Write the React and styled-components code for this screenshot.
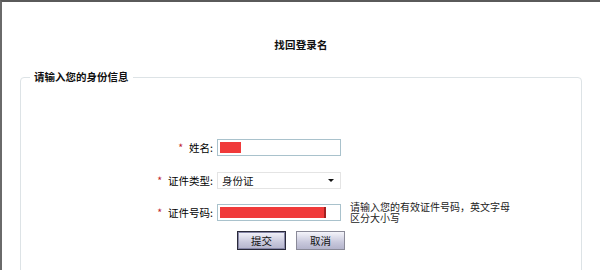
import styled, { createGlobalStyle } from "styled-components";

const Global = createGlobalStyle`
  html, body {
    margin: 0;
    padding: 0;
    background: #fff;
  }
  body {
    font-family: "Noto Sans CJK SC", "Noto Sans", sans-serif;
    color: #111;
  }
`;

const Page = styled.div`
  width: 600px;
  height: 270px;
  box-sizing: border-box;
  border-top: 2px solid #5a5a5a;
  border-left: 2px solid #6a6a6a;
  overflow: hidden;
`;

const Title = styled.h1`
  margin: 0;
  padding-top: 36px;
  height: 20px;
  text-align: center;
  font-size: 10.5px;
  font-weight: bold;
  line-height: 14px;
  letter-spacing: 0.2px;
`;

const Box = styled.fieldset`
  margin: 12px 18px 0 18px;
  padding: 0;
  border: 1px solid #dde3e6;
  border-radius: 4px;
  height: 220px;
`;

const Legend = styled.legend`
  margin-left: 9px;
  padding: 0 4px;
  font-size: 10.5px;
  font-weight: bold;
  line-height: 14px;
`;

const Form = styled.div`
  display: grid;
  grid-template-columns: 192px 124px 170px;
  grid-template-rows: 17px 17px 17px 19px;
  column-gap: 4px;
  row-gap: 15.5px;
  align-items: center;
  padding-top: 55px;
`;

const Label = styled.label`
  text-align: right;
  font-size: 10.5px;
  line-height: 17px;
  white-space: nowrap;
  color: #000;
`;

const Star = styled.span`
  color: #c0282d;
  margin-right: 6px;
`;

const Field = styled.div`
  box-sizing: border-box;
  height: 17px;
  border: 1px solid #a9c2cc;
  background: #fff;
  display: flex;
  align-items: center;
  padding: 0 2px;
`;

const Redact = styled.div`
  height: 11px;
  width: ${(p) => p.$w}px;
  background: #f03a3a;
  border-right: ${(p) => (p.$edge ? "2px solid #a02020" : "none")};
`;

const Select = styled.div`
  box-sizing: border-box;
  height: 17px;
  display: flex;
  align-items: center;
  justify-content: space-between;
  padding: 0 6px 0 4px;
  font-size: 10.5px;
  border: 1px solid #e4e4e4;
  background: #fff;
`;

const Caret = styled.span`
  width: 0;
  height: 0;
  border-left: 3px solid transparent;
  border-right: 3px solid transparent;
  border-top: 3px solid #111;
`;

const Hint = styled.div`
  font-size: 10px;
  line-height: 11px;
  padding-left: 5px;
  margin-top: -2px;
  width: 160px;
  color: #222;
`;

const Empty = styled.div``;

const Buttons = styled.div`
  grid-column: 2 / 4;
  display: flex;
  gap: 10px;
  padding-left: 20px;
  margin-top: -12px;
`;

const Button = styled.button`
  width: 49px;
  height: 19px;
  padding: 0;
  font-family: inherit;
  font-size: 10.5px;
  line-height: 15px;
  color: #111;
  background: linear-gradient(#f4f4fa, #c8c8dc 60%, #b4b4cc);
  border: 1px solid ${(p) => (p.$primary ? "#2a2a3a" : "#8a8a98")};
  box-shadow: ${(p) => (p.$primary ? "inset 0 0 0 1px #8888a8" : "none")};
`;

export default function App() {
  return (
    <>
      <Global />
      <Page>
        <Title>找回登录名</Title>
        <Box>
          <Legend>请输入您的身份信息</Legend>
          <Form>
            <Label>
              <Star>*</Star>姓名:
            </Label>
            <Field>
              <Redact $w={21} />
            </Field>
            <Empty />

            <Label>
              <Star>*</Star>证件类型:
            </Label>
            <Select>
              身份证
              <Caret />
            </Select>
            <Empty />

            <Label>
              <Star>*</Star>证件号码:
            </Label>
            <Field>
              <Redact $w={104} $edge />
            </Field>
            <Hint>请输入您的有效证件号码，英文字母区分大小写</Hint>

            <Buttons>
              <Button $primary>提交</Button>
              <Button>取消</Button>
            </Buttons>
          </Form>
        </Box>
      </Page>
    </>
  );
}
